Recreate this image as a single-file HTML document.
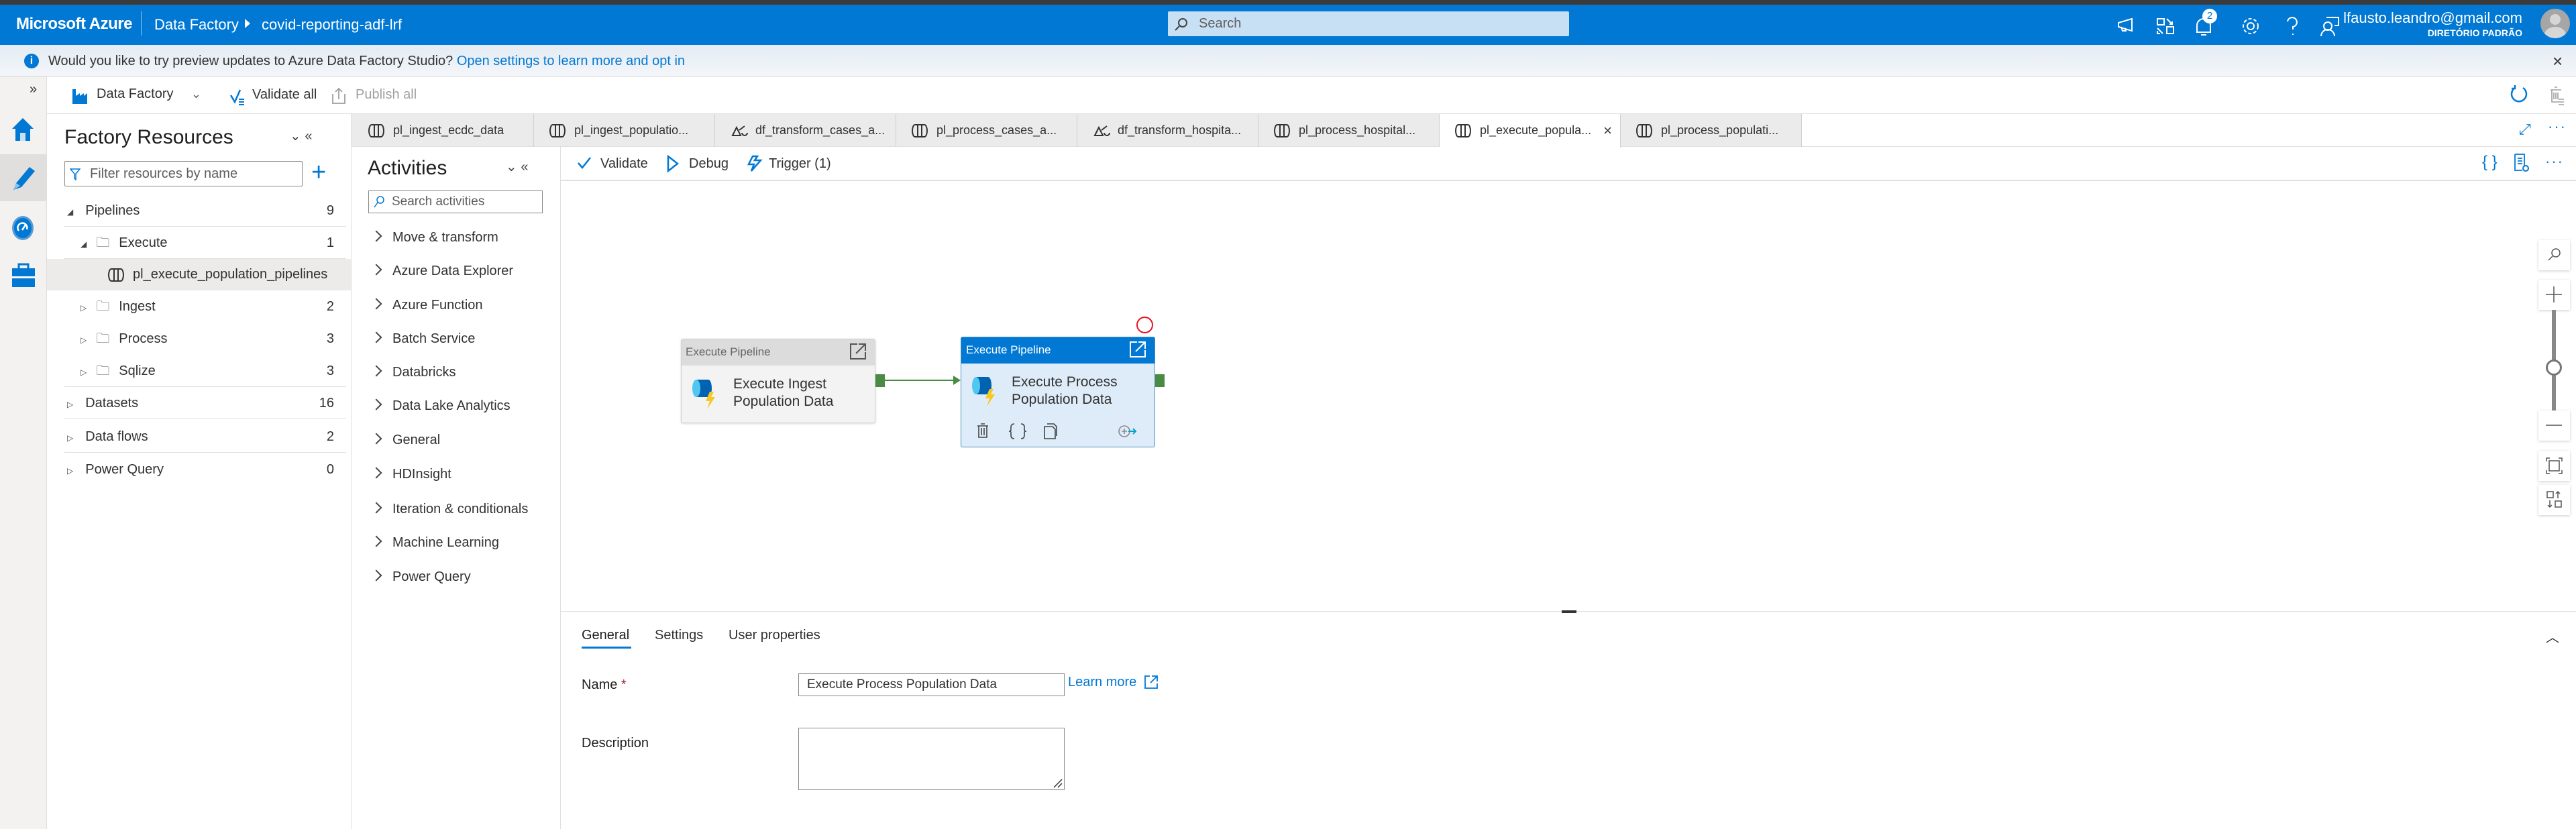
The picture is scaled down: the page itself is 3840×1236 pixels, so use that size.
<!DOCTYPE html>
<html><head><meta charset="utf-8"><style>
*{box-sizing:border-box;margin:0;padding:0}
body{width:3840px;height:1236px;position:relative;overflow:hidden;background:#fff;font-family:"Liberation Sans",sans-serif;color:#323130;font-size:20px}
.a{position:absolute;white-space:nowrap}
.ic{stroke:#0078d4;fill:none;stroke-width:2.5}
.row{position:absolute;left:96px;width:420px;height:48px;border-bottom:1px solid #e1dfdd;font-size:20px;line-height:48px}
.tri{font-size:12px;color:#444}
.act{position:absolute;left:555px;font-size:20px;color:#323130}
.act:before{content:"";display:inline-block;width:10px;height:10px;border-right:2px solid #444;border-top:2px solid #444;transform:rotate(45deg);margin-right:18px;position:relative;top:-2px}
.tab{position:absolute;top:170px;height:49px;width:270px;border-right:1px solid #d0d0d0;font-size:18px;line-height:49px;padding-left:60px;color:#323130}
.tab svg{position:absolute;left:22px;top:14px}
.zb{position:absolute;left:3784px;width:47px;height:45px;background:#fff;box-shadow:0 1px 4px rgba(0,0,0,.2)}
</style></head><body>
<div class="a" style="left:0;top:0;width:3840px;height:7px;background:#3b3b3b"></div>
<div class="a" style="left:0;top:7px;width:3840px;height:60px;background:#0078d4"></div>
<div class="a" style="left:24px;top:22px;color:#fff;font-size:24px;font-weight:bold;letter-spacing:-0.5px">Microsoft Azure</div>
<div class="a" style="left:210px;top:17px;width:1px;height:36px;background:#8ec3ee"></div>
<div class="a" style="left:230px;top:24px;color:#fff;font-size:22px">Data Factory</div>
<div class="a" style="left:365px;top:28px;width:0;height:0;border-left:8px solid #fff;border-top:7px solid transparent;border-bottom:7px solid transparent"></div>
<div class="a" style="left:390px;top:24px;color:#fff;font-size:22px">covid-reporting-adf-lrf</div>
<div class="a" style="left:1741px;top:17px;width:598px;height:37px;background:#c7e0f4;border-radius:2px"></div>
<svg class="a" style="left:1750px;top:25px" width="22" height="22"><circle cx="13" cy="9" r="6" stroke="#444" fill="none" stroke-width="2"/><path d="M8 14 L2 20" stroke="#444" stroke-width="2"/></svg>
<div class="a" style="left:1787px;top:24px;font-size:20px;color:#605e5c">Search</div>
<svg class="a" style="left:3150px;top:22px" width="340" height="34" fill="none" stroke="#fff" stroke-width="2">
<path d="M8 12 L28 6 V24 L8 18 Z M12 18 L14 24 H19 L18 20"/>
<rect x="66" y="6" width="10" height="9"/><path d="M80 6 L88 14 M84 14 H88 V10 M66 20 L74 28 M66 24 V28 H70"/><rect x="80" y="18" width="10" height="10"/>
<path d="M125 26 V16 A10 10 0 0 1 145 16 V26 Z M131 30 H139"/>
<circle cx="205" cy="17" r="5"/><circle cx="205" cy="17" r="11" stroke-dasharray="5 3"/>
<path d="M260 10 A7 7 0 1 1 268 18 V22 M268 28 V30"/>
<circle cx="320" cy="17" r="6"/><path d="M310 32 A10 10 0 0 1 330 32 M318 4 H336 V16 H330"/>
</svg>
<div class="a" style="left:3283px;top:13px;width:22px;height:22px;border-radius:50%;background:#fff;color:#0078d4;font-size:15px;text-align:center;line-height:22px">2</div>
<div class="a" style="right:80px;top:14px;color:#fff;font-size:22px;text-align:right">lfausto.leandro@gmail.com</div>
<div class="a" style="right:80px;top:41px;color:#fff;font-size:14px;font-weight:bold">DIRETÓRIO PADRÃO</div>
<div class="a" style="left:3787px;top:13px;width:44px;height:44px;border-radius:50%;background:#a6a6a6;overflow:hidden"><div style="position:absolute;left:14px;top:8px;width:16px;height:16px;border-radius:50%;background:#d6d6d6"></div><div style="position:absolute;left:6px;top:27px;width:32px;height:24px;border-radius:50%;background:#d6d6d6"></div></div>
<!-- info bar -->
<div class="a" style="left:0;top:67px;width:3840px;height:47px;background:linear-gradient(#e4ebf3,#f3f6fa);border-bottom:1px solid #d0d0d0"></div>
<div class="a" style="left:36px;top:80px;width:22px;height:22px;border-radius:50%;background:#0078d4;color:#fff;font-size:16px;font-weight:bold;text-align:center;line-height:22px">i</div>
<div class="a" style="left:72px;top:80px;font-size:20px">Would you like to try preview updates to Azure Data Factory Studio? <span style="color:#0078d4">Open settings to learn more and opt in</span></div>
<div class="a" style="left:3805px;top:76px;font-size:26px;color:#333">×</div>
<!-- left rail -->
<div class="a" style="left:0;top:114px;width:70px;height:1122px;background:#f3f2f1;border-right:1px solid #e1dfdd"></div>
<div class="a" style="left:44px;top:122px;font-size:20px;color:#333">»</div>
<svg class="a" style="left:14px;top:172px" width="40" height="40"><path d="M4 20 L20 4 L36 20 H31 V38 H9 V20 Z" fill="#0078d4"/><rect x="16" y="26" width="8" height="12" fill="#c7e0f4"/></svg>
<div class="a" style="left:0;top:230px;width:70px;height:70px;background:#e1dfdd"></div>
<svg class="a" style="left:14px;top:243px" width="40" height="46"><path d="M6 40 L10 30 L30 6 L38 12 L18 36 Z" fill="#0078d4"/><path d="M6 40 L10 30 L16 34 Z" fill="#8ec3ee"/></svg>
<div class="a" style="left:18px;top:322px;width:32px;height:36px;border-radius:50%;background:#0078d4;border:3px solid #5a9bd6"></div>
<svg class="a" style="left:24px;top:328px" width="20" height="22"><path d="M4 16 A7 7 0 1 1 16 14 M9 15 L15 6" stroke="#fff" stroke-width="2.5" fill="none"/></svg>
<svg class="a" style="left:16px;top:392px" width="38" height="36"><rect x="2" y="8" width="34" height="28" fill="#0078d4"/><rect x="12" y="2" width="14" height="8" fill="none" stroke="#0078d4" stroke-width="3"/><rect x="2" y="20" width="34" height="3" fill="#fff"/></svg>
<!-- toolbar -->
<div class="a" style="left:70px;top:169px;width:3770px;height:1px;background:#e1dfdd"></div>
<svg class="a" style="left:106px;top:129px" width="26" height="28"><path d="M2 26 V4 H7 V14 L13 10 V14 L19 10 V14 L24 10 V26 Z" fill="#0078d4"/></svg>
<div class="a" style="left:144px;top:129px;font-size:20px">Data Factory</div>
<div class="a" style="left:285px;top:130px;font-size:18px;color:#605e5c">⌄</div>
<svg class="a" style="left:342px;top:132px" width="26" height="26"><path d="M2 10 L8 20 L16 2" class="ic"/><path d="M14 16 H22 M14 20 H22 M14 24 H22" stroke="#0078d4" stroke-width="2"/></svg>
<div class="a" style="left:376px;top:130px;font-size:20px">Validate all</div>
<svg class="a" style="left:494px;top:130px" width="22" height="26"><path d="M2 10 V24 H20 V10 M11 18 V2 M6 7 L11 2 L16 7" stroke="#a19f9d" fill="none" stroke-width="1.8"/></svg>
<div class="a" style="left:530px;top:130px;font-size:20px;color:#a19f9d">Publish all</div>
<svg class="a" style="left:3740px;top:126px" width="30" height="30"><path d="M9 5 A11 11 0 1 0 21 5 M9 1 L9 6 L4 6" class="ic" stroke-width="2"/></svg>
<svg class="a" style="left:3798px;top:128px" width="26" height="30"><path d="M4 6 H20 M10 2 H14 M6 6 V24 H16 M9 10 V20 M12 10 V20 M15 10 V20 M16 20 H24 M16 24 H24 M16 28 H24" stroke="#a19f9d" fill="none" stroke-width="1.6"/></svg>
<!-- Factory resources panel -->
<div class="a" style="left:523px;top:170px;width:1px;height:1066px;background:#e1dfdd"></div>
<div class="a" style="left:96px;top:188px;font-size:30px;color:#201f1e">Factory Resources</div>
<div class="a" style="left:432px;top:190px;font-size:20px;color:#444">⌄ «</div>
<div class="a" style="left:96px;top:240px;width:355px;height:38px;border:1px solid #8a8886;border-radius:2px"></div>
<svg class="a" style="left:104px;top:251px" width="16" height="18"><path d="M1 1 H15 L9 8 V17 L7 15 V8 Z" stroke="#0078d4" fill="none" stroke-width="1.5"/></svg>
<div class="a" style="left:134px;top:248px;font-size:20px;color:#605e5c">Filter resources by name</div>
<div class="a" style="left:464px;top:236px;font-size:38px;color:#0078d4;font-weight:200">+</div>
<div class="row" style="top:290px;"><span class="tri" style="margin-left:4px">◢</span><span style="margin-left:18px">Pipelines</span><span style="position:absolute;right:18px">9</span></div>
<div class="row" style="top:338px;"><span class="tri" style="margin-left:24px">◢</span><span style="margin-left:14px;color:#555">🗀</span><span style="margin-left:14px">Execute</span><span style="position:absolute;right:18px">1</span></div>
<div class="a" style="left:70px;top:386px;width:453px;height:47px;background:#edebe9"></div>
<svg class="a" style="left:160px;top:399px" width="28" height="22"><path d="M6 2 A4 9 0 0 0 6 20 H20 A4 9 0 0 0 20 2 Z M10 2 V20 M16 2 V20" stroke="#333" fill="none" stroke-width="2"/></svg>
<div class="a" style="left:198px;top:398px;font-size:20px">pl_execute_population_pipelines</div>
<div class="row" style="top:433px;border-bottom:none"><span class="tri" style="margin-left:24px">▷</span><span style="margin-left:14px;color:#555">🗀</span><span style="margin-left:14px">Ingest</span><span style="position:absolute;right:18px">2</span></div>
<div class="row" style="top:481px;border-bottom:none"><span class="tri" style="margin-left:24px">▷</span><span style="margin-left:14px;color:#555">🗀</span><span style="margin-left:14px">Process</span><span style="position:absolute;right:18px">3</span></div>
<div class="row" style="top:529px;"><span class="tri" style="margin-left:24px">▷</span><span style="margin-left:14px;color:#555">🗀</span><span style="margin-left:14px">Sqlize</span><span style="position:absolute;right:18px">3</span></div>
<div class="row" style="top:577px;"><span class="tri" style="margin-left:4px">▷</span><span style="margin-left:18px">Datasets</span><span style="position:absolute;right:18px">16</span></div>
<div class="row" style="top:627px;"><span class="tri" style="margin-left:4px">▷</span><span style="margin-left:18px">Data flows</span><span style="position:absolute;right:18px">2</span></div>
<div class="row" style="top:676px;border-bottom:none"><span class="tri" style="margin-left:4px">▷</span><span style="margin-left:18px">Power Query</span><span style="position:absolute;right:18px">0</span></div>
<!-- tabs -->
<div class="a" style="left:524px;top:170px;width:3316px;height:49px;background:#ebebeb;border-bottom:1px solid #e1dfdd"></div>
<div class="tab" style="left:526px"><svg width="28" height="22"><path d="M6 2 A4 9 0 0 0 6 20 H20 A4 9 0 0 0 20 2 Z M10 2 V20 M16 2 V20" stroke="#333" fill="none" stroke-width="2"/></svg>pl_ingest_ecdc_data</div>
<div class="tab" style="left:796px"><svg width="28" height="22"><path d="M6 2 A4 9 0 0 0 6 20 H20 A4 9 0 0 0 20 2 Z M10 2 V20 M16 2 V20" stroke="#333" fill="none" stroke-width="2"/></svg>pl_ingest_populatio...</div>
<div class="tab" style="left:1066px"><svg width="28" height="22"><path d="M4 18 L10 6 L16 18 Z M14 10 L22 4 M18 14 A4 4 0 1 0 26 14" stroke="#333" fill="none" stroke-width="2"/></svg>df_transform_cases_a...</div>
<div class="tab" style="left:1336px"><svg width="28" height="22"><path d="M6 2 A4 9 0 0 0 6 20 H20 A4 9 0 0 0 20 2 Z M10 2 V20 M16 2 V20" stroke="#333" fill="none" stroke-width="2"/></svg>pl_process_cases_a...</div>
<div class="tab" style="left:1606px"><svg width="28" height="22"><path d="M4 18 L10 6 L16 18 Z M14 10 L22 4 M18 14 A4 4 0 1 0 26 14" stroke="#333" fill="none" stroke-width="2"/></svg>df_transform_hospita...</div>
<div class="tab" style="left:1876px"><svg width="28" height="22"><path d="M6 2 A4 9 0 0 0 6 20 H20 A4 9 0 0 0 20 2 Z M10 2 V20 M16 2 V20" stroke="#333" fill="none" stroke-width="2"/></svg>pl_process_hospital...</div>
<div class="tab" style="left:2146px;background:#fff;height:50px"><svg width="28" height="22"><path d="M6 2 A4 9 0 0 0 6 20 H20 A4 9 0 0 0 20 2 Z M10 2 V20 M16 2 V20" stroke="#333" fill="none" stroke-width="2"/></svg>pl_execute_popula...<span style="position:absolute;right:12px;font-size:22px">×</span></div>
<div class="tab" style="left:2416px"><svg width="28" height="22"><path d="M6 2 A4 9 0 0 0 6 20 H20 A4 9 0 0 0 20 2 Z M10 2 V20 M16 2 V20" stroke="#333" fill="none" stroke-width="2"/></svg>pl_process_populati...</div>
<div class="a" style="left:2686px;top:170px;width:1154px;height:49px;background:#fff;border-bottom:1px solid #e1dfdd"></div>
<div class="a" style="left:3755px;top:180px;font-size:22px;color:#0078d4">⤢</div>
<div class="a" style="left:3798px;top:176px;font-size:22px;color:#0078d4;letter-spacing:2px">···</div>
<!-- Activities -->
<div class="a" style="left:835px;top:219px;width:1px;height:1017px;background:#e1dfdd"></div>
<div class="a" style="left:548px;top:234px;font-size:30px;color:#201f1e">Activities</div>
<div class="a" style="left:754px;top:236px;font-size:20px;color:#444">⌄ «</div>
<div class="a" style="left:549px;top:284px;width:260px;height:34px;border:1px solid #8a8886"></div>
<svg class="a" style="left:556px;top:291px" width="18" height="20"><circle cx="11" cy="7" r="5" stroke="#0078d4" fill="none" stroke-width="1.5"/><path d="M7 11 L2 18" stroke="#0078d4" stroke-width="1.5"/></svg>
<div class="a" style="left:584px;top:290px;font-size:19px;color:#605e5c">Search activities</div>
<div class="act" style="top:343px">Move &amp; transform</div>
<div class="act" style="top:393px">Azure Data Explorer</div>
<div class="act" style="top:444px">Azure Function</div>
<div class="act" style="top:494px">Batch Service</div>
<div class="act" style="top:544px">Databricks</div>
<div class="act" style="top:594px">Data Lake Analytics</div>
<div class="act" style="top:645px">General</div>
<div class="act" style="top:696px">HDInsight</div>
<div class="act" style="top:748px">Iteration &amp; conditionals</div>
<div class="act" style="top:798px">Machine Learning</div>
<div class="act" style="top:849px">Power Query</div>
<!-- canvas toolbar -->
<div class="a" style="left:836px;top:268px;width:3004px;height:2px;background:#e1dfdd"></div>
<svg class="a" style="left:860px;top:233px" width="22" height="20"><path d="M2 10 L8 17 L20 2" class="ic" stroke-width="2"/></svg>
<div class="a" style="left:895px;top:233px;font-size:20px">Validate</div>
<svg class="a" style="left:993px;top:231px" width="20" height="26"><path d="M3 2 L17 13 L3 24 Z" class="ic" stroke-width="2"/></svg>
<div class="a" style="left:1027px;top:233px;font-size:20px">Debug</div>
<svg class="a" style="left:1112px;top:231px" width="26" height="26"><path d="M10 2 L4 14 H12 L8 24 L22 8 H13 L17 2 Z" class="ic" stroke-width="2"/></svg>
<div class="a" style="left:1146px;top:233px;font-size:20px">Trigger (1)</div>
<div class="a" style="left:3700px;top:228px;font-size:24px;color:#0078d4">{ }</div>
<svg class="a" style="left:3746px;top:228px" width="26" height="30"><path d="M3 2 H17 V20 M3 2 V26 H14 M7 8 H14 M7 12 H14 M7 16 H14" stroke="#0078d4" fill="none" stroke-width="1.8"/><circle cx="19" cy="23" r="4" stroke="#0078d4" fill="none" stroke-width="2"/></svg>
<div class="a" style="left:3794px;top:228px;font-size:22px;color:#0078d4;letter-spacing:2px">···</div>
<!-- nodes -->
<div class="a" style="left:1015px;top:505px;width:290px;height:126px;background:#f3f3f3;border:1px solid #d0d0d0;border-radius:3px;box-shadow:0 1px 3px rgba(0,0,0,.15)"></div>
<div class="a" style="left:1016px;top:506px;width:288px;height:39px;background:#dcdcdc"></div>
<div class="a" style="left:1022px;top:515px;font-size:17px;color:#666">Execute Pipeline</div>
<svg class="a" style="left:1266px;top:511px" width="26" height="26"><path d="M12 2 H2 V24 H24 V14 M14 2 H24 V12 M24 2 L10 16" stroke="#555" fill="none" stroke-width="2"/></svg>
<svg class="a" style="left:1030px;top:562px" width="44" height="52"><path d="M8 4 H26 V30 H8 Z" fill="#0063b1"/><ellipse cx="8" cy="17" rx="6" ry="13" fill="#50c7f0"/><ellipse cx="26" cy="17" rx="5" ry="13" fill="#0063b1"/><path d="M28 22 L22 36 H28 L24 48 L36 30 H30 L34 22 Z" fill="#f8c822"/></svg>
<div class="a" style="left:1093px;top:560px;font-size:21px;line-height:26px;color:#323130">Execute Ingest<br>Population Data</div>
<div class="a" style="left:1305px;top:558px;width:14px;height:19px;background:#498b43"></div>
<div class="a" style="left:1319px;top:566px;width:104px;height:2px;background:#498b43"></div>
<div class="a" style="left:1421px;top:560px;width:0;height:0;border-left:11px solid #498b43;border-top:7px solid transparent;border-bottom:7px solid transparent"></div>
<div class="a" style="left:1432px;top:502px;width:290px;height:165px;background:#deecf9;border:1px solid #4b8fb8;border-radius:3px"></div>
<div class="a" style="left:1433px;top:503px;width:288px;height:39px;background:#0078d4"></div>
<div class="a" style="left:1440px;top:512px;font-size:17px;color:#fff">Execute Pipeline</div>
<svg class="a" style="left:1683px;top:508px" width="26" height="26"><path d="M12 2 H2 V24 H24 V14 M14 2 H24 V12 M24 2 L10 16" stroke="#fff" fill="none" stroke-width="2"/></svg>
<svg class="a" style="left:1447px;top:558px" width="44" height="52"><path d="M8 4 H26 V30 H8 Z" fill="#0063b1"/><ellipse cx="8" cy="17" rx="6" ry="13" fill="#50c7f0"/><ellipse cx="26" cy="17" rx="5" ry="13" fill="#0063b1"/><path d="M28 22 L22 36 H28 L24 48 L36 30 H30 L34 22 Z" fill="#f8c822"/></svg>
<div class="a" style="left:1508px;top:557px;font-size:21px;line-height:26px;color:#323130">Execute Process<br>Population Data</div>
<svg class="a" style="left:1455px;top:630px" width="240" height="26" fill="none" stroke="#444" stroke-width="1.6"><path d="M2 5 H18 M7 2 H13 M4 5 V22 H16 V5 M8 8 V19 M12 8 V19"/><path d="M57 2 Q52 2 52 7 V11 Q52 13 49 13 Q52 13 52 15 V19 Q52 24 57 24 M67 2 Q72 2 72 7 V11 Q72 13 75 13 Q72 13 72 15 V19 Q72 24 67 24"/><path d="M106 2 H116 L120 6 V20 M102 6 H114 L118 10 V24 H102 Z"/><circle cx="221" cy="13" r="8" stroke="#888"/><path d="M217 13 H225 M221 9 V17" stroke="#888"/><path d="M227 13 H238 M234 9 L238 13 L234 17" stroke="#00a2c7" stroke-width="2"/></svg>
<div class="a" style="left:1722px;top:558px;width:14px;height:19px;background:#498b43"></div>
<div class="a" style="left:1694px;top:472px;width:25px;height:25px;border:2px solid #e81123;border-radius:50%"></div>
<!-- zoom controls -->
<div class="zb" style="top:358px"><svg width="47" height="45"><circle cx="26" cy="19" r="6" stroke="#555" fill="none" stroke-width="1.5"/><path d="M21 24 L15 30" stroke="#555" stroke-width="1.5"/></svg></div>
<div class="zb" style="top:417px"><svg width="47" height="45"><path d="M23 10 V34 M11 22 H35" stroke="#555" stroke-width="1.5"/></svg></div>
<div class="a" style="left:3804px;top:462px;width:6px;height:150px;background:#888"></div>
<div class="a" style="left:3795px;top:536px;width:24px;height:24px;border-radius:50%;border:3px solid #777;background:#fff"></div>
<div class="zb" style="top:612px"><svg width="47" height="45"><path d="M11 22 H35" stroke="#555" stroke-width="1.5"/></svg></div>
<div class="zb" style="top:672px"><svg width="47" height="45" fill="none" stroke="#555" stroke-width="1.5"><rect x="16" y="15" width="15" height="15"/><path d="M12 16 V11 H17 M30 11 H35 V16 M35 29 V34 H30 M17 34 H12 V29"/></svg></div>
<div class="zb" style="top:723px"><svg width="47" height="45" fill="none" stroke="#555" stroke-width="1.5"><rect x="13" y="10" width="9" height="9"/><rect x="25" y="24" width="9" height="9"/><path d="M29 20 V10 M26 13 L29 10 L32 13 M17 23 V33 M14 30 L17 33 L20 30"/></svg></div>
<!-- bottom panel -->
<div class="a" style="left:836px;top:911px;width:3004px;height:1px;background:#e1dfdd"></div>
<div class="a" style="left:2328px;top:910px;width:22px;height:4px;background:#333"></div>
<div class="a" style="left:867px;top:936px;font-size:20px;color:#201f1e">General</div>
<div class="a" style="left:867px;top:964px;width:74px;height:3px;background:#0078d4"></div>
<div class="a" style="left:976px;top:936px;font-size:20px;color:#323130">Settings</div>
<div class="a" style="left:1086px;top:936px;font-size:20px;color:#323130">User properties</div>
<div class="a" style="left:3795px;top:934px;font-size:20px;color:#333">︿</div>
<div class="a" style="left:867px;top:1010px;font-size:20px;color:#201f1e">Name <span style="color:#a4262c">*</span></div>
<div class="a" style="left:1190px;top:1004px;width:397px;height:34px;border:1px solid #8a8886;font-size:19px;line-height:32px;padding-left:12px">Execute Process Population Data</div>
<div class="a" style="left:1592px;top:1006px;font-size:20px;color:#0078d4">Learn more</div>
<svg class="a" style="left:1705px;top:1006px" width="22" height="22"><path d="M9 2 H2 V20 H20 V13 M12 2 H20 V10 M20 2 L10 12" stroke="#0078d4" fill="none" stroke-width="1.8"/></svg>
<div class="a" style="left:867px;top:1097px;font-size:20px;color:#201f1e">Description</div>
<div class="a" style="left:1190px;top:1085px;width:397px;height:93px;border:1px solid #8a8886"></div>
<svg class="a" style="left:1567px;top:1158px" width="18" height="18"><path d="M16 4 L4 16 M16 10 L10 16" stroke="#333" stroke-width="1.5"/></svg>
</body></html>
